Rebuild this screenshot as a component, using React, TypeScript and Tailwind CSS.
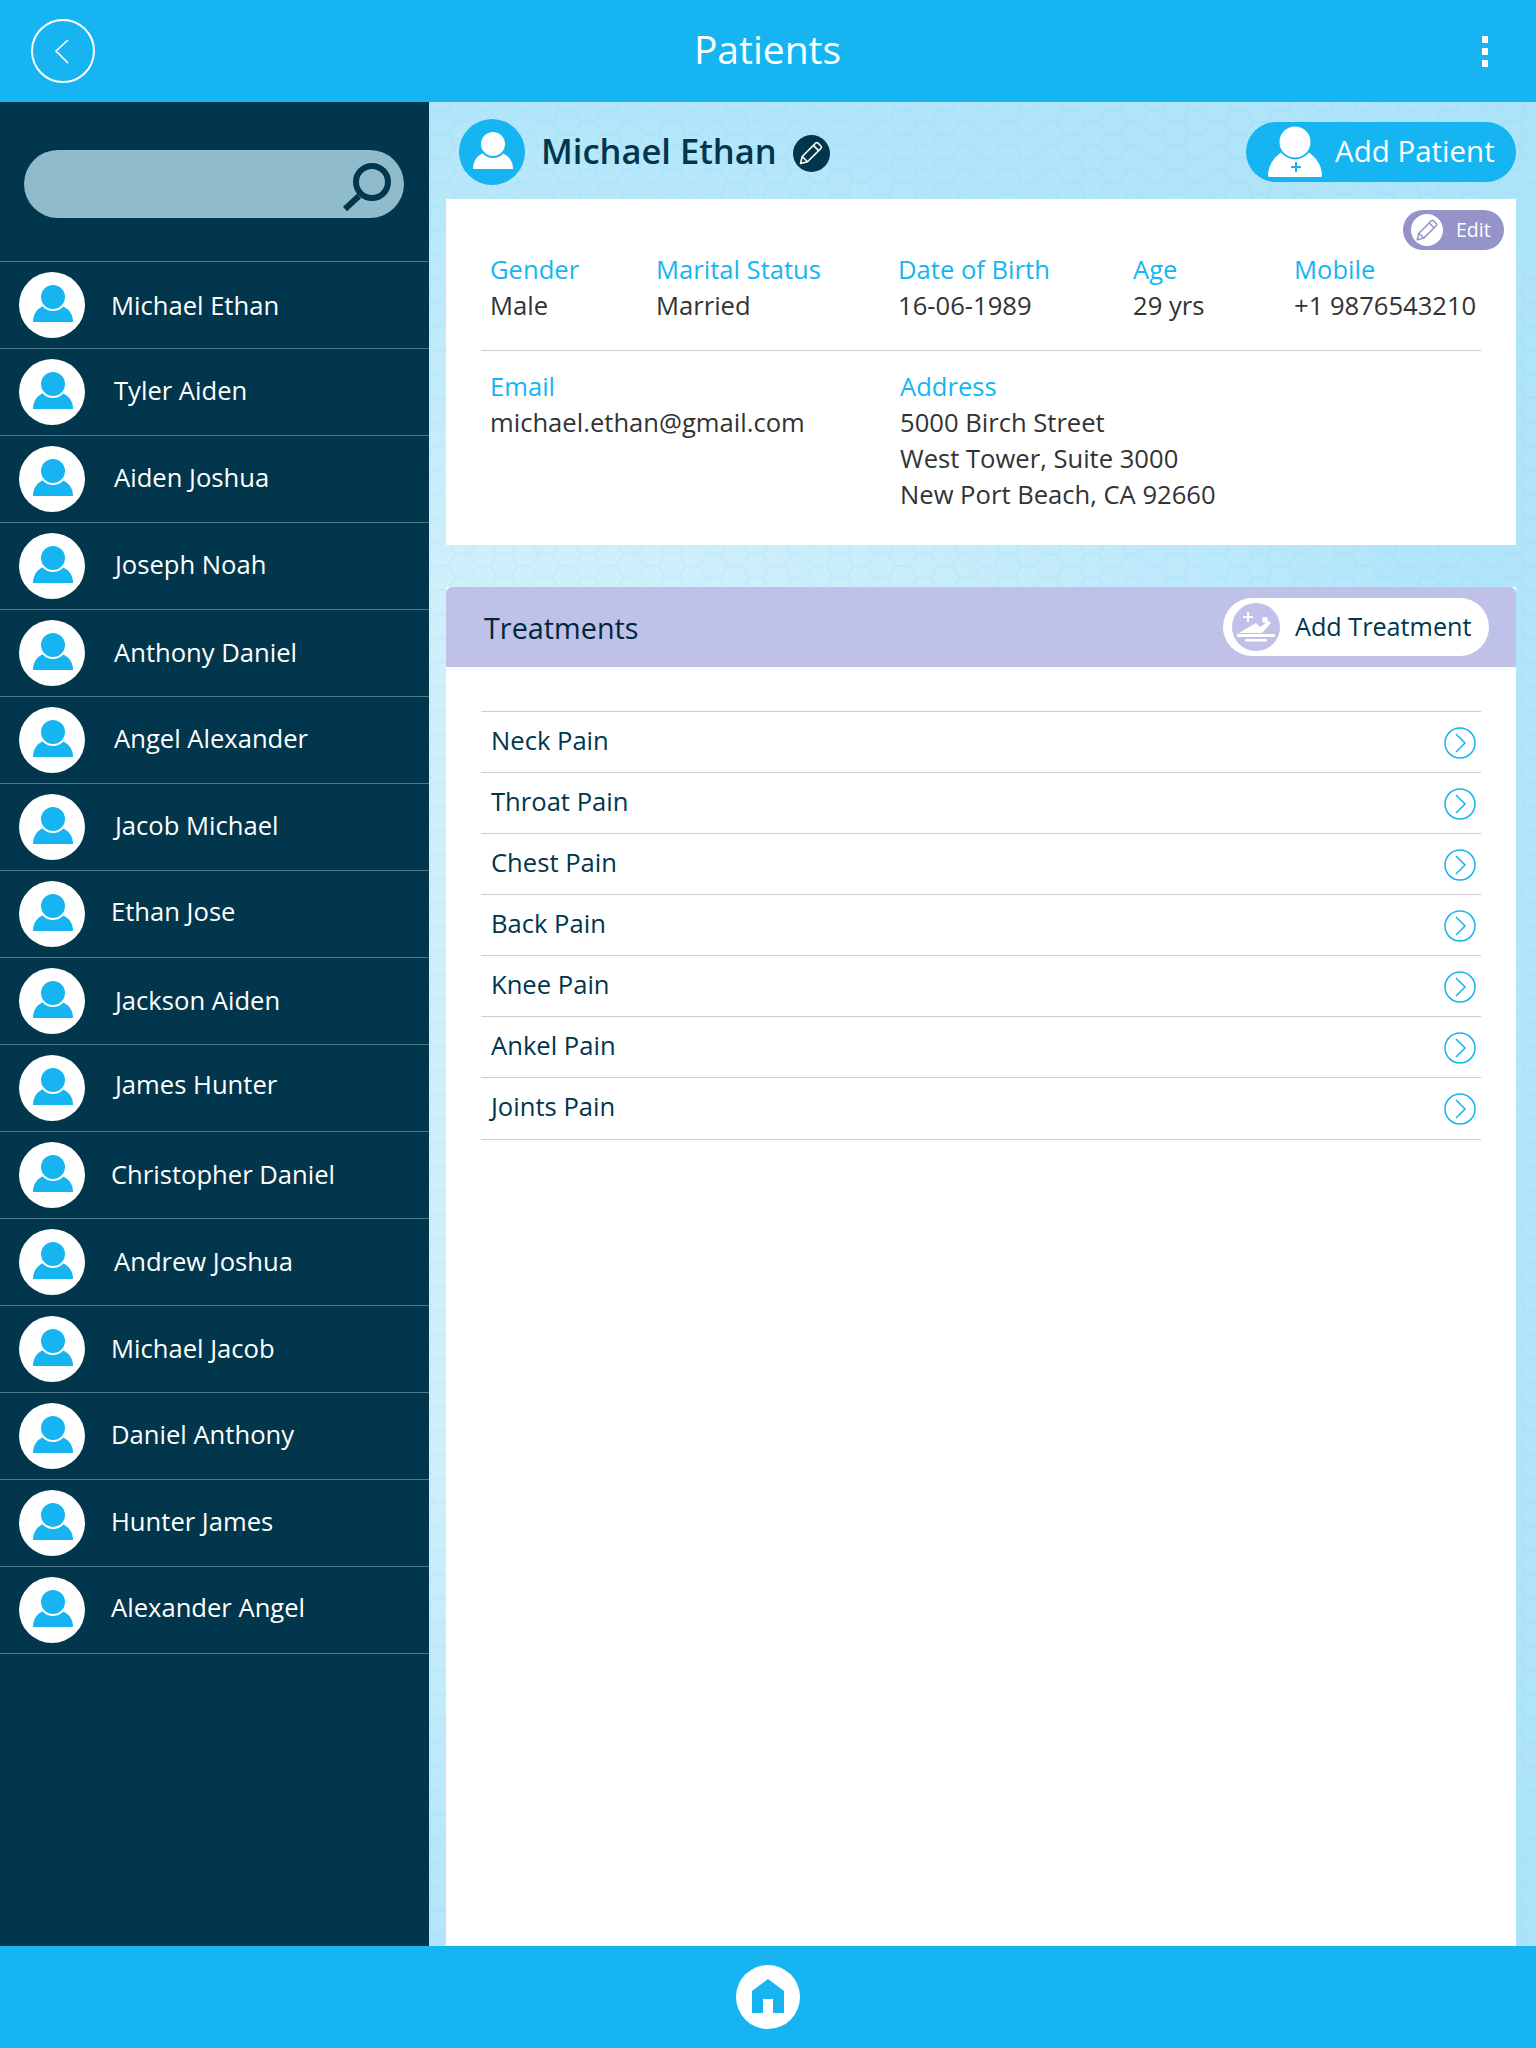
const PATIENTS = [
  { name: 'Michael Ethan', text: 'ml-[26px] mt-[2px]' },
  { name: 'Tyler Aiden', text: 'ml-[29px] mb-[2px]' },
  { name: 'Aiden Joshua', text: 'ml-[29px] mb-[2px]' },
  { name: 'Joseph Noah', text: 'ml-[30px] mb-[2px]' },
  { name: 'Anthony Daniel', text: 'ml-[29px]' },
  { name: 'Angel Alexander', text: 'ml-[29px] mb-[2px]' },
  { name: 'Jacob Michael', text: 'ml-[30px] mb-[2px]' },
  { name: 'Ethan Jose', text: 'ml-[26px] mb-[4px]' },
  { name: 'Jackson Aiden', text: 'ml-[30px]' },
  { name: 'James Hunter', text: 'ml-[30px] mb-[5px]' },
  { name: 'Christopher Daniel', text: 'ml-[26px] mt-[1px]' },
  { name: 'Andrew Joshua', text: 'ml-[29px]' },
  { name: 'Michael Jacob', text: 'ml-[26px] mt-[1px]' },
  { name: 'Daniel Anthony', text: 'ml-[26px] mb-[2px]' },
  { name: 'Hunter James', text: 'ml-[26px] mb-[2px]' },
  { name: 'Alexander Angel', text: 'ml-[26px] mb-[3px]' },
];

const TREATMENTS = ['Neck Pain', 'Throat Pain', 'Chest Pain', 'Back Pain', 'Knee Pain', 'Ankel Pain', 'Joints Pain'];

const FONT = { fontFamily: '"Open Sans", sans-serif' };

function Person({ body, gap, className }: { body: string; gap: string; className: string }) {
  return (
    <svg viewBox="0 0 66 66" className={className}>
      <path d="M14 50 C14 41 19 36 26 33 H41 C49 36 54 41 54 50 Z" fill={body} />
      <circle cx="34" cy="25" r="13" fill={body} stroke={gap} strokeWidth="2" />
    </svg>
  );
}

function PencilIcon({ color, className }: { color: string; className: string }) {
  return (
    <svg viewBox="0 0 24 24" fill="none" stroke={color} strokeWidth="1.4" strokeLinejoin="round" className={className}>
      <path d="M3 21 L4.5 15 L16 3.5 Q17 2.5 18 3.5 L20.5 6 Q21.5 7 20.5 8 L9 19.5 Z" />
      <path d="M14 5.5 L18.5 10 M4.5 15 L9 19.5" />
    </svg>
  );
}

function BedIcon() {
  return (
    <svg viewBox="0 0 48 48" className="w-12 h-12 shrink-0">
      <circle cx="24" cy="24" r="24" fill="#bfc1e9" />
      <path d="M16 9 V19 M11 14 H21" stroke="#fff" strokeWidth="2" />
      <circle cx="33" cy="17" r="3" fill="#fff" />
      <path d="M7 30 L24 20 L28 24 L37 18 L39 20 L30 30 Z" fill="#fff" />
      <path d="M5 31 H43 V34 H5 Z M13 36 H35 V38.5 H13 Z" fill="#fff" />
    </svg>
  );
}

function Field({ label, value, className }: { label: string; value: string; className: string }) {
  return (
    <div className={className}>
      <div className="text-[#16b5f2] text-[25.6px] leading-[36px]">{label}</div>
      <div className="text-[#333] text-[25.6px] leading-[36px] whitespace-pre-line">{value}</div>
    </div>
  );
}

export default function App() {
  return (
    <div className="w-[1536px] h-[2048px] flex flex-col overflow-hidden bg-white" style={FONT}>
      {/* Top bar */}
      <header className="h-[102px] shrink-0 bg-[#16b5f2] grid grid-cols-3 items-center pl-[31px] pr-[48px]">
        <button className="w-[64px] h-[64px] rounded-full border-2 border-white flex items-center justify-center">
          <svg viewBox="0 0 16 26" className="w-[16px] h-[26px] mr-[3px]" fill="none" stroke="#fff" strokeWidth="1.6">
            <path d="M14 2 L2 13 L14 25" />
          </svg>
        </button>
        <h1 className="text-white text-[39px] font-normal text-center ml-[16px] mb-[4px]">Patients</h1>
        <div className="flex flex-col gap-[5px] w-[6px] justify-self-end">
          <span className="w-[6px] h-[7px] bg-white" />
          <span className="w-[6px] h-[7px] bg-white" />
          <span className="w-[6px] h-[7px] bg-white" />
        </div>
      </header>

      <div className="flex-1 flex min-h-0">
        {/* Patient list */}
        <aside className="w-[429px] shrink-0 bg-[#01364c]">
          <div className="h-[160px] pt-[48px] pl-[24px] border-b border-[#4d7889]">
            <div className="w-[380px] h-[68px] rounded-full bg-[#8fbbcb] flex items-center justify-end pr-[11px]">
              <svg viewBox="0 0 52 56" className="w-[52px] h-[56px]" fill="none" stroke="#01364c">
                <circle cx="31" cy="26" r="16" strokeWidth="6" />
                <path d="M18 40 L4 53" strokeWidth="6" />
              </svg>
            </div>
          </div>
          {PATIENTS.map((p) => (
            <div key={p.name} className="h-[87px] flex items-center pl-[19px] border-b border-[#4d7889]">
              <div className="w-[66px] h-[66px] rounded-full bg-white shrink-0">
                <Person body="#16b5f2" gap="#ffffff" className="w-[66px] h-[66px]" />
              </div>
              <span className={`text-white text-[25.6px] ${p.text}`}>{p.name}</span>
            </div>
          ))}
        </aside>

        {/* Patient detail */}
        <main className="relative flex-1 pl-[17px] pr-[20px] bg-[radial-gradient(ellipse_at_10%_50%,#cfeffb_35%,#b2e5fa_72%,#ace3f9_100%)]">
          <svg className="absolute inset-0 w-full h-full" aria-hidden="true">
            <defs>
              <pattern id="hex" width="42" height="24" patternUnits="userSpaceOnUse" patternTransform="translate(-2 8)">
                <path d="M0 12 L7 0 H21 L28 12 L21 24 H7 Z M28 12 H42" fill="none" stroke="#16b5f2" strokeOpacity="0.07" strokeWidth="1.5" />
              </pattern>
            </defs>
            <rect width="100%" height="100%" fill="url(#hex)" />
          </svg>

          <div className="relative h-full flex flex-col">
            <div className="h-[97px] flex items-start justify-between">
              <div className="flex items-center ml-[13px] mt-[17px]">
                <div className="w-[66px] h-[66px] rounded-full bg-[#16b5f2]">
                  <Person body="#ffffff" gap="#16b5f2" className="w-[66px] h-[66px]" />
                </div>
                <span className="ml-[16px] mb-[3px] text-[#01364c] text-[34.5px] font-semibold">Michael Ethan</span>
                <div className="ml-[16px] w-[37px] h-[37px] rounded-full bg-[#01364c] flex items-center justify-center mt-[2px]">
                  <PencilIcon color="#ffffff" className="w-[28px] h-[28px]" />
                </div>
              </div>
              <button className="w-[270px] h-[60px] mt-[20px] rounded-full bg-[#16b5f2] flex items-center pl-[22px]">
                <svg viewBox="0 0 54 52" className="w-[54px] h-[52px] shrink-0">
                  <path d="M0 50 C0 36 10 28 17 24 H37 C44 28 54 36 54 50 Q54 51 52 51 H2 Q0 51 0 50 Z" fill="#fff" />
                  <circle cx="27" cy="16" r="16.5" fill="#fff" stroke="#16b5f2" strokeWidth="2" />
                  <path d="M28 36 V46 M23 41 H33" stroke="#16b5f2" strokeWidth="2" />
                </svg>
                <span className="ml-[13px] mb-[2px] text-white text-[29.5px]">Add Patient</span>
              </button>
            </div>

            {/* Info card */}
            <section className="relative h-[346px] bg-white shrink-0">
              <button className="absolute top-[11px] right-[12px] w-[101px] h-[40px] rounded-full bg-[#9493ca] flex items-center pl-[8px]">
                <span className="w-[32px] h-[32px] rounded-full bg-white flex items-center justify-center">
                  <PencilIcon color="#9493ca" className="w-[26px] h-[26px]" />
                </span>
                <span className="ml-[13px] text-white text-[19.5px]">Edit</span>
              </button>
              <div className="flex pl-[44px] pt-[53px] h-[151px]">
                <Field label="Gender" value="Male" className="w-[166px]" />
                <Field label="Marital Status" value="Married" className="w-[242px]" />
                <Field label="Date of Birth" value="16-06-1989" className="w-[235px]" />
                <Field label="Age" value="29 yrs" className="w-[161px]" />
                <Field label="Mobile" value="+1 9876543210" className="whitespace-nowrap" />
              </div>
              <div className="mx-[35px] border-t border-[#ccc]" />
              <div className="flex pl-[44px] pt-[18px]">
                <Field label="Email" value="michael.ethan@gmail.com" className="w-[410px]" />
                <Field label="Address" value={'5000 Birch Street\nWest Tower, Suite 3000\nNew Port Beach, CA 92660'} className="" />
              </div>
            </section>

            {/* Treatments */}
            <section className="mt-[42px] flex-1 flex flex-col bg-white">
              <div className="h-[80px] bg-[#bfc1e9] rounded-t-[6px] flex items-center justify-between pl-[38px] pr-[27px]">
                <h2 className="text-[#01273a] text-[28.8px] font-normal mt-[2px]">Treatments</h2>
                <button className="w-[266px] h-[58px] rounded-full bg-white flex items-center pl-[9px]">
                  <BedIcon />
                  <span className="ml-[15px] text-[#01364c] text-[25.2px] mb-[1px]">Add Treatment</span>
                </button>
              </div>
              <ul className="mx-[35px] mt-[44px] border-t border-[#ccc]">
                {TREATMENTS.map((t) => (
                  <li key={t} className="h-[61px] last:h-[62px] flex items-center justify-between pl-[10px] pr-[5px] border-b border-[#ccc]">
                    <span className="text-[#01364c] text-[25.6px] mb-[2px]">{t}</span>
                    <svg viewBox="0 0 32 32" className="w-8 h-8 mt-[1px]" fill="none" stroke="#16b5f2" strokeWidth="1.5">
                      <circle cx="16" cy="16" r="15" />
                      <path d="M12 7 L21 16 L12 25" />
                    </svg>
                  </li>
                ))}
              </ul>
            </section>
          </div>
        </main>
      </div>

      {/* Bottom bar */}
      <footer className="h-[102px] shrink-0 bg-[#16b5f2] flex items-center justify-center">
        <div className="w-[64px] h-[64px] rounded-full bg-white flex items-center justify-center">
          <svg viewBox="0 0 32 36" className="w-[32px] h-[36px]">
            <path d="M16 0 L32 12 V34 H21 V20 H11 V34 H0 V12 Z" fill="#16b5f2" />
          </svg>
        </div>
      </footer>
    </div>
  );
}
